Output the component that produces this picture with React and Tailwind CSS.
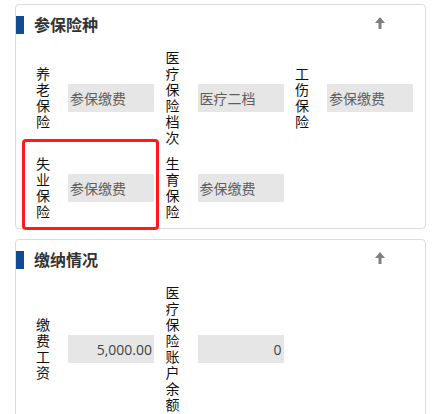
import React from 'react'

const font = { fontFamily: '"Open Sans", "Noto Sans CJK SC", sans-serif' }

function UpArrow() {
    return (
        <svg width="10" height="12" viewBox="0 0 10 12" className="block">
            <path d="M5 0 L10 6 L6.5 6 L6.5 12 L3.5 12 L3.5 6 L0 6 Z" fill="#7f7f7f" />
        </svg>
    )
}

function Field({ label, value, right }) {
    return (
        <div className="flex items-center">
            <div className="w-[14px] text-[14px] leading-[16px] text-[#111] break-all">{label}</div>
            <div
                className={`ml-[18px] w-[86px] h-[28px] bg-[#e6e6e6] text-[14px] flex items-center ${right ? 'justify-end pr-[2px] text-[#444]' : 'pl-[2px] text-[#5e5e5e]'}`}
            >
                {value}
            </div>
        </div>
    )
}

function Card({ title, children }) {
    return (
        <section className="ml-[15px] w-[411px] border border-[#dcdcdc] rounded-[4px] bg-white">
            <div className="flex items-center h-[18px] mt-[11px]">
                <div className="w-[8px] h-[18px] bg-[#0f4c92]" />
                <h2 className="ml-[10px] text-[16px] font-bold text-[#333] leading-[18px]">{title}</h2>
                <div className="ml-auto mr-[40px] -mt-[4px]">
                    <UpArrow />
                </div>
            </div>
            <div className="pt-[16px] pb-[8px] pl-[20px] grid grid-cols-[repeat(3,129.5px)] gap-y-[10px]">
                {children}
            </div>
        </section>
    )
}

export default function App() {
    return (
        <div className="relative w-[443px] h-[414px] overflow-hidden bg-white pt-[4px]" style={font}>
            <Card title="参保险种">
                <Field label="养老保险" value="参保缴费" />
                <Field label="医疗保险档次" value="医疗二档" />
                <Field label="工伤保险" value="参保缴费" />
                <Field label="失业保险" value="参保缴费" />
                <Field label="生育保险" value="参保缴费" />
            </Card>
            <div className="h-[10px]" />
            <Card title="缴纳情况">
                <Field label="缴费工资" value="5,000.00" right />
                <Field label="医疗保险账户余额" value="0" right />
            </Card>
            <div className="absolute left-[22px] top-[139px] w-[137px] h-[91px] border-[3px] border-[#ff1a1a] rounded-[4px]" />
        </div>
    )
}
